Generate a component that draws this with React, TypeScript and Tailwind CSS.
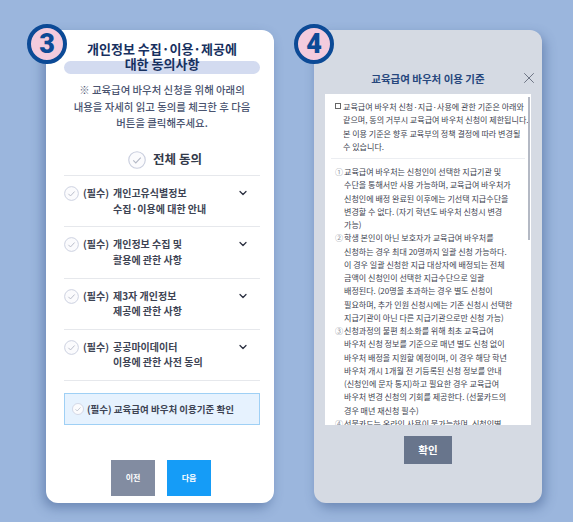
import { ChevronDown, X } from "lucide-react";

const rows = [
  ["개인고유식별정보", "수집·이용에 대한 안내"],
  ["개인정보 수집 및", "활용에 관한 사항"],
  ["제3자 개인정보", "제공에 관한 사항"],
  ["공공마이데이터", "이용에 관한 사전 동의"],
];

const clauses = [
  {
    mark: "①",
    lines: [
      "교육급여 바우처는 신청인이 선택한 지급기관 및",
      "수단을 통해서만 사용 가능하며, 교육급여 바우처가",
      "신청인에 배정 완료된 이후에는 기선택 지급수단을",
      "변경할 수 없다. (자기 학년도 바우처 신청시 변경",
      "가능)",
    ],
  },
  {
    mark: "②",
    lines: [
      "학생 본인이 아닌 보호자가 교육급여 바우처를",
      "신청하는 경우 최대 20명까지 일괄 신청 가능하다.",
      "이 경우 일괄 신청한 지급 대상자에 배정되는 전체",
      "금액이 신청인이 선택한 지급수단으로 일괄",
      "배정된다. (20명을 초과하는 경우 별도 신청이",
      "필요하며, 추가 인원 신청시에는 기존 신청시 선택한",
      "지급기관이 아닌 다른 지급기관으로만 신청 가능)",
    ],
  },
  {
    mark: "③",
    lines: [
      "신청과정의 불편 최소화를 위해 최초 교육급여",
      "바우처 신청 정보를 기준으로 매년 별도 신청 없이",
      "바우처 배정을 지원할 예정이며, 이 경우 해당 학년",
      "바우처 개시 1개월 전 기등록된 신청 정보를 안내",
      "(신청인에 문자 통지)하고 필요한 경우 교육급여",
      "바우처 변경 신청의 기회를 제공한다. (선불카드의",
      "경우 매년 재신청 필수)",
    ],
  },
  {
    mark: "④",
    lines: ["선불카드는 온라인 사용이 불가능하며, 신청인별"],
  },
];

const CheckCircle = ({ size }: { size: number }) => (
  <svg width={size} height={size} viewBox="0 0 24 24" fill="none" className="shrink-0">
    <circle cx="12" cy="12" r="11" stroke="#c9cede" strokeWidth="1.5" fill="#fbfbfd" />
    <path d="M7 12.5l3.4 3.4L17 8.8" stroke="#b4b9c6" strokeWidth="1.5" fill="none" />
  </svg>
);

const Badge = ({ n, className }: { n: string; className: string }) => (
  <div
    className={`absolute flex h-10 w-10 items-center justify-center rounded-full border-[4px] border-[#0c4a96] bg-[#f3cbdd] font-['Roboto',sans-serif] text-[27px] leading-none font-black text-[#0c4a96] ${className}`}
  >
    {n}
  </div>
);

export default function App() {
  return (
    <div className="flex h-[522px] w-[573px] gap-[40px] overflow-hidden bg-[#9bb6dd] pt-[30px] pl-[46px] font-['Noto_Sans_CJK_KR','Noto_Sans',sans-serif]">
      {/* Step 3 */}
      <div className="relative flex h-[473px] w-[228px] flex-col rounded-[12px] bg-white pt-[11px] pr-[14px] pl-[18px] shadow-[-3px_5px_12px_rgba(50,80,130,0.45)]">
        <Badge n="3" className="top-[-6px] left-[-19px]" />
        <div className="relative text-center text-[13px] leading-[15px] font-bold whitespace-nowrap text-[#17305f]">
          <div className="absolute top-[20px] left-0 h-[13px] w-full rounded-full bg-[#d3dbf0]" />
          <div className="relative">개인정보 수집·이용·제공에</div>
          <div className="relative">대한 동의사항</div>
        </div>
        <div className="mt-[11px] text-center text-[10.4px] leading-[16.5px] font-medium whitespace-nowrap text-[#4a5470]">
          <div>※ 교육급여 바우처 신청을 위해 아래의</div>
          <div>내용을 자세히 읽고 동의를 체크한 후 다음</div>
          <div>버튼을 클릭해주세요.</div>
        </div>
        <div className="mt-[15px] ml-[6px] flex h-[26px] items-center justify-center gap-[7px]">
          <CheckCircle size={18} />
          <span className="text-[12.5px] font-bold text-[#333a4a]">전체 동의</span>
        </div>
        <div className="mt-[2.5px] border-t border-[#e6e8ec]">
          {rows.map((r) => (
            <div
              key={r[0]}
              className="flex h-[51.3px] items-start border-b border-[#e6e8ec] pt-[9px] text-[10px] leading-[15.5px] font-bold whitespace-nowrap text-[#3d4353]"
            >
              <div className="mt-[1px] mr-[4px]">
                <CheckCircle size={15} />
              </div>
              <span className="w-[30px]">(필수)</span>
              <div className="flex-1">
                <div>{r[0]}</div>
                <div>{r[1]}</div>
              </div>
              <ChevronDown size={12} strokeWidth={2.5} className="mt-[2px] mr-[11px] text-[#2b3040]" />
            </div>
          ))}
        </div>
        <div className="mt-[12px] flex h-[32px] items-center gap-[3px] border border-[#9fd0f5] bg-[#e6f2fe] pl-[7px] text-[9.5px] font-bold whitespace-nowrap text-[#3d4353]">
          <CheckCircle size={12} />
          <span>(필수) 교육급여 바우처 이용기준 확인</span>
        </div>
        <div className="mt-[35px] -ml-[2px] flex justify-center gap-[12px] text-[8px] font-bold text-white">
          <div className="flex h-[36px] w-[44px] items-center justify-center bg-[#828ca1]">이전</div>
          <div className="flex h-[36px] w-[44px] items-center justify-center bg-[#159cf7]">다음</div>
        </div>
      </div>

      {/* Step 4 */}
      <div className="relative flex h-[473px] w-[228px] flex-col items-center rounded-[12px] bg-[#d5dae3] shadow-[3px_5px_12px_rgba(50,80,130,0.45)]">
        <Badge n="4" className="top-[-6px] left-[-20px]" />
        <div className="mt-[41px] flex h-[16px] w-full items-center justify-center text-[10.5px] font-bold text-[#27477d]">
          교육급여 바우처 이용 기준
          <X size={18} strokeWidth={1} className="absolute top-[39px] right-[4px] text-[#4b5366]" />
        </div>
        <div className="relative mt-[7px] h-[331px] w-[206px] shrink-0 overflow-hidden bg-white pt-[6px] pl-[10px] text-[8.05px] leading-[13.25px] whitespace-nowrap text-[#3d4350]">
          <div className="absolute top-[3px] right-[1px] h-[143px] w-[2px] bg-[#b4b9c4]" />
          <div className="flex">
            <div className="mt-[3px] mr-[2px] h-[6px] w-[6px] shrink-0 border border-[#666]" />
            <div>
              <div>교육급여 바우처 신청·지급·사용에 관한 기준은 아래와</div>
              <div>같으며, 동의 거부시 교육급여 바우처 신청이 제한됩니다.</div>
              <div>본 이용 기준은 향후 교육부의 정책 결정에 따라 변경될</div>
              <div>수 있습니다.</div>
            </div>
          </div>
          <div className="mt-[5px] mr-[6px] -ml-[4px] border-t border-[#eceef2] pt-[6px] pl-[4px]">
            {clauses.map((c) => (
              <div key={c.mark} className="flex">
                <span className="w-[9px] shrink-0 text-[#8d93a0]">{c.mark}</span>
                <div>
                  {c.lines.map((l) => (
                    <div key={l}>{l}</div>
                  ))}
                </div>
              </div>
            ))}
          </div>
        </div>
        <div className="mt-[11px] flex h-[28px] w-[48px] items-center justify-center bg-[#68758c] text-[10.5px] font-bold text-white">
          확인
        </div>
      </div>
    </div>
  );
}
